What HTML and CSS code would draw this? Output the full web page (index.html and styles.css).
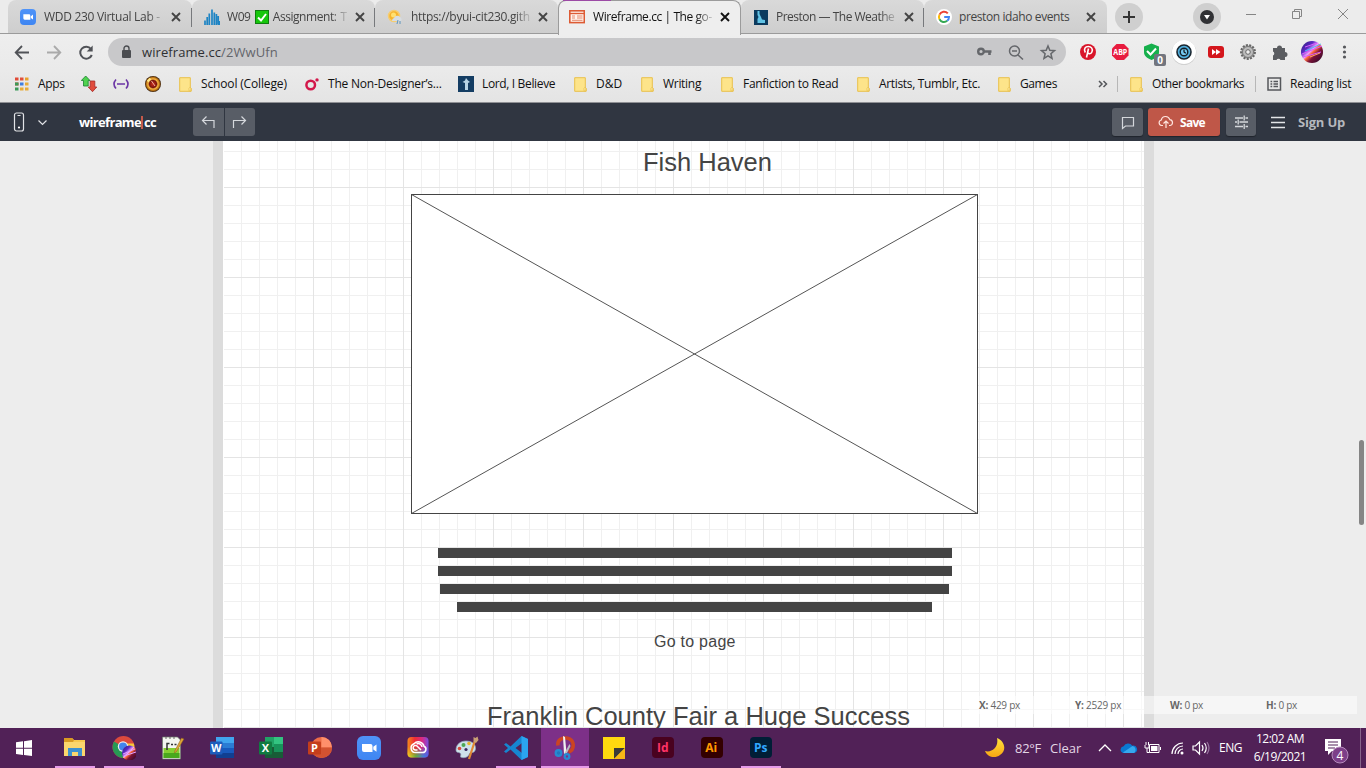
FILE: index.html
```
<!DOCTYPE html>
<html lang="en">
<head>
<meta charset="utf-8">
<title>Wireframe.cc | The go-to wireframing tool</title>
<link rel="stylesheet" href="styles.css">
</head>
<body>
<svg class="defs" width="0" height="0">
  <defs>
    <linearGradient id="g-zoom" x1="0" y1="0" x2="0" y2="1"><stop offset="0" stop-color="#4f93f8"/><stop offset="1" stop-color="#3f86f2"/></linearGradient>
    <linearGradient id="g-neon" x1="0" y1="0" x2="1" y2="1"><stop offset="0" stop-color="#2a1a6e"/><stop offset=".3" stop-color="#5b2bc4"/><stop offset=".45" stop-color="#f3a0ff"/><stop offset=".52" stop-color="#ff6a3c"/><stop offset=".65" stop-color="#7a1236"/><stop offset="1" stop-color="#1a0828"/></linearGradient>
    <linearGradient id="g-rain" x1="0" y1="0" x2="1" y2="0"><stop offset="0" stop-color="#f58a1c"/><stop offset=".35" stop-color="#ee2c34"/><stop offset=".7" stop-color="#d92a86"/><stop offset="1" stop-color="#7a4be0"/></linearGradient>
    <linearGradient id="g-rain-low" x1="0" y1="0" x2="1" y2="0"><stop offset="0" stop-color="#ffdc1c"/><stop offset=".4" stop-color="#4cc43f"/><stop offset=".75" stop-color="#2b8de0"/><stop offset="1" stop-color="#4a62ee"/></linearGradient>
    <linearGradient id="g-fade" x1="0" y1="0" x2="0" y2="1"><stop offset=".45" stop-color="#000"/><stop offset="1" stop-color="#fff"/></linearGradient>
    <mask id="m-low"><rect x="1" y="1" width="22" height="21" fill="url(#g-fade)"/></mask>
    <radialGradient id="g-ball"><stop offset="0" stop-color="#d1301c"/><stop offset=".45" stop-color="#7a160e"/><stop offset=".62" stop-color="#f7b944"/><stop offset=".8" stop-color="#c47a18"/><stop offset="1" stop-color="#2a1404"/></radialGradient>
    <linearGradient id="g-moon" x1="0" y1="0" x2="0" y2="1"><stop offset="0" stop-color="#ffe23c"/><stop offset="1" stop-color="#f8a512"/></linearGradient>
    <symbol id="close" viewBox="0 0 10 10"><path d="M1 1l8 8M9 1l-8 8" stroke="currentColor" stroke-width="1.9"/></symbol>
    <symbol id="folder" viewBox="0 0 13 15"><path d="M.7.7h10.6v9.5l.9 1.3v2.800H.7z" fill="#fde48a" stroke="#e9c04a" stroke-width="1"/><path d="M10 13.800v-2.500l.8-1 1 1.200v2.300z" fill="#fdeaa0" stroke="#e6bb42" stroke-width=".6"/></symbol>
    <symbol id="camera" viewBox="0 0 24 24"><rect width="24" height="24" rx="6" fill="url(#g-zoom)"/><path d="M5 8h8.500q2 0 2 2v6H7q-2 0-2-2zM16.300 10.700L19.500 8.400v7.400l-3.200-2.300z" fill="#fff"/></symbol>
  </defs>
</svg>

<div class="tabs">
  <div class="tab tab-first"><svg class="fav" viewBox="0 0 24 24"><use href="#camera"/></svg><span class="title t1">WDD 230 Virtual Lab -</span><svg class="x"><use href="#close"/></svg></div>
  <div class="tab sep"><svg class="fav" viewBox="0 0 16 16"><path d="M1 16v-4.500M3.200 16V8M5.300 16V4.500M8 16V0.500M10.300 16V3.500M12.400 16V5M14.200 16V7M15.500 16v-4" stroke="#1d84c4" stroke-width="1.700"/></svg><span class="title t2">W09 <i class="check"><svg viewBox="0 0 14 14"><rect x=".5" y=".5" width="13" height="13" fill="#16c60c" stroke="#107c10"/><path d="M3 7.500l3 3L11 4" fill="none" stroke="#fff" stroke-width="2"/></svg></i> Assignment: T</span><svg class="x"><use href="#close"/></svg></div>
  <div class="tab sep"><svg class="fav" viewBox="0 0 16 16"><circle cx="7" cy="7" r="5.500" fill="#f7b32b" stroke="#f6cd70" stroke-width="1.500"/><circle cx="6.500" cy="6" r="2.500" fill="#ffe071"/><path d="M5 12a3 3 0 0 1 2-3 3.500 3.500 0 0 1 6-1 2.500 2.500 0 0 1 1 4z" fill="#d7dde2"/><path d="M11 11l-1 4M13 12v3" stroke="#5f96bd"/></svg><span class="title t3">https://byui-cit230.gith</span><svg class="x"><use href="#close"/></svg></div>
  <div class="tab active"><svg class="fav" viewBox="0 0 16 16"><rect x=".8" y="1.800" width="14.500" height="11.800" fill="#fff3ed" stroke="#dd5b34" stroke-width="1.600"/><path d="M1 4.500h14" stroke="#dd5b34" stroke-width="1.400"/><path d="M3 7h3M8 7h5.500M3 9h3M8 9h5.500M3 11.300h10.500" stroke="#e5896c" stroke-width="1"/></svg><span class="title t4">Wireframe.cc | The go-</span><svg class="x"><use href="#close"/></svg></div>
  <div class="tab"><svg class="fav" viewBox="0 0 16 16"><rect x="1" y="1" width="14" height="15" fill="#0b3a5e"/><path d="M4.500 2h2v3L8 8l1 2.500 3 .5v3H4.500v-4l1-2-1-2z" fill="#62c4e6"/></svg><span class="title t5">Preston — The Weathe</span><svg class="x"><use href="#close"/></svg></div>
  <div class="tab sep"><svg class="fav" viewBox="0 0 16 16"><circle cx="8" cy="8" r="8" fill="#fff"/><g fill="none" stroke-width="2"><path d="M11.800 4.400A5 5 0 0 0 3.500 5.700" stroke="#ea4335"/><path d="M3.500 5.700a5 5 0 0 0 0 4.600" stroke="#fbbc05"/><path d="M3.500 10.300a5 5 0 0 0 7.700 1.500" stroke="#34a853"/><path d="M11.200 11.800A5 5 0 0 0 13 8H8.200" stroke="#4285f4"/></g></svg><span class="title t6">preston idaho events</span><svg class="x"><use href="#close"/></svg></div>
  <svg class="round plus" viewBox="0 0 28 28"><circle cx="14" cy="14" r="14" fill="#cfcfcf"/><path d="M14 8v12M8 14h12" stroke="#333" stroke-width="2"/></svg>
  <svg class="round media" viewBox="0 0 28 28"><circle cx="14" cy="14" r="14" fill="#cfcfcf"/><circle cx="14" cy="14" r="7" fill="#303134"/><path d="M11 12h6l-3 4.500z" fill="#fff"/></svg>
  <svg class="winctl" viewBox="0 0 104 16"><g fill="none" stroke="#858585"><path d="M0 8.500h10M46.500 5.500h7v7h-7zM48.500 5.500v-2h7v7h-2M92 3l10 10M102 3L92 13"/></g></svg>
</div>

<div class="toolbar">
  <svg class="nav" viewBox="0 0 94 19"><g fill="none" stroke-width="1.800"><path d="M15 9.500H2M8 3L1.700 9.500 8 16" stroke="#505257"/><path d="M33 9.500h13M40 3l6.300 6.500L40 16" stroke="#aaa"/><path d="M77 6a6 6 0 1 0 .8 6" stroke="#505257" stroke-width="2"/></g><path d="M78.700 2.500v6h-6z" fill="#505257"/></svg>
  <div class="omni">
    <svg class="lock" viewBox="0 0 10 14"><rect y="5" width="9" height="8" rx="1" fill="#4b4d51"/><path d="M2 6V3.500a2.500 2.500 0 0 1 5 0V6" fill="none" stroke="#4b4d51" stroke-width="1.400"/></svg>
    <span class="url">wireframe.cc<em>/2WwUfn</em></span>
    <svg class="omni-icons" viewBox="0 0 80 18"><g fill="none" stroke="#65676b"><circle cx="4" cy="8.500" r="2.800" stroke-width="2.400"/><path d="M7 8.500h7.500M12.500 8.500V12" stroke-width="2.600"/><circle cx="37.500" cy="8" r="5" stroke-width="1.500"/><path d="M35 8h5M41 12l5 4.500" stroke-width="1.600"/><path d="M71 3l1.800 4.300 4.700.4-3.600 3 1.100 4.600-4-2.500-4 2.500 1.100-4.600-3.600-3 4.700-.4z" stroke-width="1.500"/></g></svg>
  </div>
  <svg class="ext" viewBox="0 0 286 30">
    <circle cx="8" cy="15" r="8" fill="#d9152a"/><path d="M6.500 20.500l2-9M5.300 15.500c-2-3.500 0-6 3-6s5 2.500 3.600 5.500c-1 2.300-3.400 2-4 .8" fill="none" stroke="#fff" stroke-width="1.600"/>
    <path d="M36.500 7h7.500l4.500 4.500v7L44 23h-7.500L32 18.500v-7z" fill="#e81c3f"/><text x="33.300" y="18.200" class="abp" textLength="14" lengthAdjust="spacingAndGlyphs">ABP</text>
    <path d="M71.500 6.500L64 9.500v5.500c0 4 3 6 7.500 8 4.500-2 7.500-4 7.500-8V9.500z" fill="#16b04c"/><path d="M67 14l3.500 3.500 5.500-6" fill="none" stroke="#fff" stroke-width="2"/>
    <rect x="74" y="17" width="12" height="12" rx="2" fill="#72757e"/><text x="77.200" y="26.700" class="zero">0</text>
    <circle cx="104" cy="15.500" r="12.300" fill="#c9c9c9"/><circle cx="104" cy="15" r="12" fill="#fff"/><circle cx="104" cy="15" r="7" fill="#52b1e0" stroke="#1a2630" stroke-width="1.600"/><circle cx="104" cy="15" r="3.800" fill="#74c7ef" stroke="#14202a" stroke-width="1.400"/><path d="M104 12.500V15l1.800 1.300" fill="none" stroke="#111" stroke-width="1.200"/>
    <rect x="128" y="9" width="16" height="12" rx="3" fill="#d4161c"/><path d="M132 12l4 3-4 3zM136 12l4.500 3-4.500 3z" fill="#fff"/>
    <circle cx="168" cy="15" r="6.800" fill="#b5b5b5" stroke="#666" stroke-width="2.300" stroke-dasharray="2 1.300"/><circle cx="168" cy="15" r="5.500" fill="#bbb" stroke="#777"/><circle cx="168" cy="15" r="2.300" fill="#eee" stroke="#666"/>
    <path d="M193 11h4a2.500 2.500 0 1 1 5 0h3v4a2.500 2.500 0 1 1 0 5v3h-4.500a2.200 2.200 0 0 0-4 0H193v-4.500a2.200 2.200 0 0 0 0-4z" fill="#5b5d61"/>
    <circle cx="232" cy="15" r="11" fill="url(#g-neon)"/><path d="M222 17l20-8M223 20l18-5M225 10l12-4" stroke="#d95bff" stroke-width="1"/><path d="M225 14l16-7" stroke="#49b6ff"/><path d="M230 20l10-4" stroke="#ffa463"/>
    <g fill="#55575b"><circle cx="264.500" cy="10" r="1.600"/><circle cx="264.500" cy="15" r="1.600"/><circle cx="264.500" cy="20" r="1.600"/></g>
  </svg>
</div>

<div class="bookmarks">
  <div class="bm apps"><svg viewBox="0 0 16 16"><path d="M0 3h3.500M0 8h3.500" stroke="#e14a36" stroke-width="3"/><path d="M5 3h3.500" stroke="#e1503a" stroke-width="3"/><path d="M10 3h3.500" stroke="#e8a02c" stroke-width="3"/><path d="M0 8h3.500M0 13h3.500" stroke="#3b9a58" stroke-width="3"/><path d="M5 8h3.500" stroke="#3f7fe0" stroke-width="3"/><path d="M10 8h3.500M5 13h3.500M10 13h3.500" stroke="#e8ac38" stroke-width="3"/></svg><span>Apps</span></div>
  <div class="bm icon1"><svg viewBox="0 0 16 16"><path d="M4.700 0L9 4.500H7.200V10H2.500V4.500H.3z" fill="#4fd24f" stroke="#1a8030" stroke-width=".8"/><path d="M9.200 5h4.600v6h2L11.500 15.700 7.200 11h2z" fill="#e04b3c" stroke="#a62a26" stroke-width=".8"/></svg></div>
  <div class="bm icon1"><svg viewBox="0 0 16 16"><path d="M3 3.500Q-1 8 3 12.500M13 3.500q4 4.500 0 9M4 8h8" fill="none" stroke="#6b35a5" stroke-width="1.600"/></svg></div>
  <div class="bm icon2"><svg viewBox="0 0 16 16"><circle cx="8" cy="8" r="8" fill="url(#g-ball)"/><path d="M6.500 5l3.500 5" stroke="#f0b0a0"/><path d="M2.500 5.500l3-3" stroke="#ffe88a" stroke-width="2.200"/></svg></div>
  <div class="bm school"><svg class="fo"><use href="#folder"/></svg><span>School (College)</span></div>
  <div class="bm designer"><svg viewBox="0 0 16 16"><circle cx="5.700" cy="9" r="4.300" fill="none" stroke="#d3174a" stroke-width="2.500"/><circle cx="12" cy="3.900" r="1.700" fill="#d3174a"/></svg><span>The Non-Designer’s...</span></div>
  <div class="bm lord"><svg viewBox="0 0 16 16"><rect width="16" height="16" fill="#143d63"/><path d="M8 2l2 2.500 2 1.500-2 1v7H7V7L4.500 6 7 4.500z" fill="#b7d4e6"/></svg><span>Lord, I Believe</span></div>
  <div class="bm dnd"><svg class="fo"><use href="#folder"/></svg><span>D&amp;D</span></div>
  <div class="bm writing"><svg class="fo"><use href="#folder"/></svg><span>Writing</span></div>
  <div class="bm fan"><svg class="fo"><use href="#folder"/></svg><span>Fanfiction to Read</span></div>
  <div class="bm artists"><svg class="fo"><use href="#folder"/></svg><span>Artists, Tumblr, Etc.</span></div>
  <div class="bm games"><svg class="fo"><use href="#folder"/></svg><span>Games</span></div>
  <svg class="more" viewBox="0 0 10 10"><path d="M1 2l3 3-3 3M5.500 2l3 3-3 3" fill="none" stroke="#55575b" stroke-width="1.500"/></svg>
  <div class="bm other"><svg class="fo"><use href="#folder"/></svg><span>Other bookmarks</span></div>
  <div class="bm reading"><svg viewBox="0 0 16 16"><rect x="1" y="2" width="12.500" height="12" fill="none" stroke="#55575b" stroke-width="1.500"/><path d="M3.500 5.500h1.700M3.500 8h1.700M3.500 10.500h1.700M6.500 5.500H11M6.500 8H11M6.500 10.500H11" stroke="#55575b" stroke-width="1.300"/></svg><span>Reading list</span></div>
</div>

<header class="app">
  <svg class="device" viewBox="0 0 36 20"><g fill="none" stroke="#e1e3e6" stroke-width="1.200"><rect x="1.500" y="1" width="9" height="18" rx="2"/><path d="M4.500 3.500h3M25.500 8.500l4 4 4-4"/></g><circle cx="6" cy="15.500" r="1.100" fill="#fff"/></svg>
  <span class="logo">wireframe<b></b>cc</span>
  <div class="undo"><svg viewBox="0 0 30 28"><path d="M13 8.500l-4 4 4 4M9 12.500h11.500V20" fill="none" stroke="#d5d8dc" stroke-width="1.200"/></svg><svg viewBox="0 0 30 28"><path d="M16 8.500l4 4-4 4M20 12.500H8V20" fill="none" stroke="#d5d8dc" stroke-width="1.200"/></svg></div>
  <div class="btn comment"><svg viewBox="0 0 30 28"><path d="M10.500 9.500h11v8.500h-8l-3 2.500z" fill="none" stroke="#d5d8dc" stroke-width="1.200"/></svg></div>
  <div class="btn save"><svg viewBox="0 0 16 14"><g fill="none" stroke="#ffe4de" stroke-width="1.200"><path d="M5 10.500H3.500a2.800 2.800 0 0 1-.2-5.500 4.400 4.400 0 0 1 8.500-.4 3 3 0 0 1 .4 5.900H11M8 13V6M5.500 8.500L8 6l2.500 2.500"/></g></svg><span>Save</span></div>
  <div class="btn sliders"><svg viewBox="0 0 30 28"><path d="M9 10h8M19.500 10H22M9 14h2M13.500 14H22M9 18.500h8M19.500 18.500H22M18.200 7.500v5M12.200 11.500v5M18.200 16v5" stroke="#d5d8dc" stroke-width="1.300"/></svg></div>
  <svg class="burger" viewBox="0 0 14 13"><path d="M0 1.500h14M0 6.500h14M0 11.500h14" stroke="#e3e5e8" stroke-width="1.300"/></svg>
  <span class="signup">Sign Up</span>
</header>

<main class="workspace">
  <div class="page">
    <h2 class="heading">Fish Haven</h2>
    <svg class="picture" viewBox="0 0 567 320"><rect x=".5" y=".5" width="566" height="319" fill="#fff" stroke="#444"/><path d="M.5.5l566 319M566.500.5L.5 319.500" stroke="#555"/></svg>
    <div class="lines"><i class="l1"></i><i class="l1"></i><i class="l3"></i><i class="l4"></i></div>
    <p class="link">Go to page</p>
    <h2 class="heading next">Franklin County Fair a Huge Success</h2>
  </div>
  <div class="status"><span class="s1"><b>X:</b> 429 px</span><span class="s2"><b>Y:</b> 2529 px</span><span class="s3"><b>W:</b> 0 px</span><span class="s4"><b>H:</b> 0 px</span></div>
  <div class="scroll"></div>
</main>

<footer class="taskbar">
  <div class="start"><svg viewBox="0 0 16 16"><path d="M0 2.300L7 1.300v6.400H0zM8 1.200L16 0v7.700H8zM0 8.700h7v6.200l-7-1zM8 8.700h8V16l-8-1.100z" fill="#fff"/></svg></div>
  <div class="task open"><svg viewBox="0 0 24 24"><path d="M1 2h8l2 2h11v16H1z" fill="#f7c84e"/><path d="M1 2h8l2 2-1 2H1z" fill="#d99a22"/><path d="M1 6h21v14H1z" fill="#fbd66d"/><path d="M5 20v-8h14v8h-4v-4H9v4z" fill="#3d91cf"/></svg></div>
  <div class="task open"><svg viewBox="0 0 24 24"><circle cx="11.500" cy="11" r="11" fill="#dc4a3d"/><path d="M11.500 11L2 5.500A11 11 0 0 0 11 22z" fill="#279a54"/><path d="M11.500 11L11 22A11 11 0 0 0 21.800 7.500H12z" fill="#f5c83a"/><circle cx="11" cy="10.500" r="5.200" fill="#eee"/><circle cx="11" cy="10.500" r="4" fill="#4284ee"/><circle cx="17.500" cy="17" r="7.500" fill="url(#g-neon)"/><path d="M11 18l12-5M12 20l12-4" stroke="#e0a0ff"/></svg></div>
  <div class="task"><svg viewBox="0 0 24 24"><path d="M1.500 1h15l3 3v19h-18z" fill="#f4f6f0" stroke="#6b7a68" stroke-width=".7"/><path d="M2.500 12h16v10h-16z" fill="#84cf31"/><path d="M2.500 17h16v5h-16z" fill="#49a81d"/><path d="M4 2h2M8 2h2M12 2h2" stroke="#666"/><path d="M6 14V7.500h2.500M10 8.500h2M13.500 8.500h2" stroke="#333" stroke-width="1.500" fill="none"/><path d="M20.500 2L14 14.500l-.5 2.500 2-1.500L23 3z" fill="#dda536" stroke="#8a5a1a" stroke-width=".5"/></svg></div>
  <div class="task"><svg viewBox="0 0 24 24"><path d="M6 1h18v6H6z" fill="#41a5ee"/><path d="M6 7h18v5H6z" fill="#2b7cd3"/><path d="M6 12h18v5H6z" fill="#185abd"/><path d="M6 17h18v5H6z" fill="#103f91"/><rect y="5.500" width="12.500" height="13" rx="1" fill="#1d5dbb"/><text x="1" y="15.800" class="office" textLength="10.500" lengthAdjust="spacingAndGlyphs">W</text></svg></div>
  <div class="task"><svg viewBox="0 0 24 24"><path d="M6 1h9v10H6z" fill="#21a366"/><path d="M15 1h9v7h-9z" fill="#33c481"/><path d="M15 8h9v8h-9z" fill="#18935a"/><path d="M6 11h9v11H6zM15 16h9v6h-9z" fill="#185c37"/><rect y="5.500" width="13" height="13" rx="1" fill="#107c41"/><text x="2.700" y="16" class="office">X</text></svg></div>
  <div class="task"><svg viewBox="0 0 24 24"><circle cx="13.500" cy="11.500" r="10.500" fill="#ed6c47"/><path d="M13.500 1a10.500 10.500 0 0 1 10.500 10.500H13.500z" fill="#ff8f6b"/><path d="M3 11.500h21a10.500 10.500 0 0 1-21 0z" fill="#d35230"/><rect y="5.500" width="13" height="13" rx="1" fill="#c43e1c"/><text x="3" y="16" class="office">P</text></svg></div>
  <div class="task"><svg viewBox="0 0 24 24"><use href="#camera"/></svg></div>
  <div class="task"><svg viewBox="0 0 24 24"><rect x="1.500" y="1" width="21" height="20.500" rx="4" fill="url(#g-rain)"/><rect x="1.500" y="1" width="21" height="20.500" rx="4" fill="url(#g-rain-low)" mask="url(#m-low)"/><g fill="none" stroke="#fff" stroke-width="1.500"><path d="M16.500 16.500h-7A4.500 4.500 0 0 1 8 7.800a5.800 5.800 0 0 1 10 2.400 3.300 3.300 0 0 1-1.500 6.300zM15 14l-4-4a2.300 2.300 0 1 0-1.500 4h2M10.500 8a3.800 3.800 0 0 1 5.500 3"/></g></svg></div>
  <div class="task"><svg viewBox="0 0 24 24"><path d="M1 14C1 8 6 5 11 5c6 0 10 3 9.500 8-1 5-4 2.500-6 4.500-1 4-6 5-9 3.500 0-2 1-3-.5-4s-4 0-4-3z" fill="#cfe1ea" stroke="#8fa8b8" stroke-width=".7"/><circle cx="8.500" cy="9" r="2" fill="#4ba854"/><circle cx="14" cy="7.500" r="1.800" fill="#e6b42e"/><circle cx="4.500" cy="12.500" r="1.800" fill="#d94d3c"/><circle cx="11" cy="13.500" r="1.600" fill="#3a2a60"/><path d="M19.500 6L14 23" stroke="#e08a35" stroke-width="2.200"/><path d="M18.500 1l2 1 2-1.500 1 3.500-2.500 3-2.500-1z" fill="#c9a075"/></svg></div>
  <div class="task open"><svg viewBox="0 0 24 24"><path d="M17.500 0L24 3v18l-6.500 3L6.500 13.500 2 17 0 15.500 4 12 0 8.500 2 7l4.500 3.500zM18 7l-6.500 5 6.500 5z" fill="#1686d0"/><path d="M17.500 0L24 3v18l-6.500 3z" fill="#2ba5ef"/></svg></div>
  <div class="task current"><svg viewBox="0 0 24 24"><path d="M5 9.500C4 4 9 1.500 13.500 2c5 .5 7.500 4.500 6.500 9-.5 3-2.500 4.500-4.500 5" fill="none" stroke="#cb4423" stroke-width="3.600"/><path d="M10 0l2 1 1.500 16-2.500 1z" fill="#f1f1f1"/><path d="M16.500 8L11 18l3-1 3.500-7z" fill="#b9bcc4"/><g fill="none" stroke="#268ad2" stroke-width="2.300"><circle cx="5.500" cy="17" r="2.800" fill="#2475bc"/><circle cx="14" cy="20.500" r="2.300"/></g></svg></div>
  <div class="task"><svg viewBox="0 0 24 24"><path d="M1 1h22v22H1z" fill="#ffd90f"/><path d="M12 12h11L12 23z" fill="#3b3b38"/><path d="M23 12v11H12z" fill="#f6b715"/></svg></div>
  <div class="task"><svg viewBox="0 0 24 24"><rect x="1" y="1" width="22" height="21" rx="4" fill="#49021f"/><text x="6" y="16" class="adobe id">Id</text></svg></div>
  <div class="task"><svg viewBox="0 0 24 24"><rect x="1" y="1" width="22" height="21" rx="4" fill="#330000"/><text x="5.300" y="16" class="adobe ai">Ai</text></svg></div>
  <div class="task open"><svg viewBox="0 0 24 24"><rect x="1" y="1" width="22" height="21" rx="4" fill="#001e36"/><text x="5" y="16" class="adobe ps">Ps</text></svg></div>
  <svg class="moon" viewBox="0 0 20 20"><path d="M12 0C20 3 22 13 15 17 10 21 2 19 0 13c7 2 14-4 12-13z" fill="url(#g-moon)"/></svg>
  <span class="temp">82°F</span><span class="clear">Clear</span>
  <svg class="tray" viewBox="0 0 112 20">
    <path d="M1 13l6-6 6 6" fill="none" stroke="#fff" stroke-width="1.300"/>
    <path d="M25 15a3.500 3.500 0 0 1 .6-6.800 5 5 0 0 1 8.700-.5 3.700 3.700 0 0 1 2 7.300z" fill="#0a78d1"/><path d="M25 14.500l9.500-6.500a4 4 0 0 1 1.700 7H26z" fill="#36a8ee"/>
    <g fill="none" stroke="#fff"><path d="M51.500 6.500h9.500v8H51.500zM62.500 9v3M47 7v3h4V7M48 4v3M50.500 4v3M49 10v4.500h2.500"/></g><path d="M53 8h6.500v5H53z" fill="#fff"/>
    <g fill="none" stroke="#fff" stroke-width="1.200"><path d="M74 16a11 11 0 0 1 11-11M77 16a8 8 0 0 1 8-8M80 16a5 5 0 0 1 5-5"/><path d="M95 8h2.500l4-4v12l-4-4H95zM104 7q2 3 0 6M106.500 5q3.500 5 0 10"/><path d="M109 4q4 6 0 12" stroke="#9a74a0"/></g><circle cx="84" cy="15" r="1.500" fill="#fff"/>
  </svg>
  <span class="lang">ENG</span>
  <div class="clock"><span class="time">12:02 AM</span><span class="date">6/19/2021</span></div>
  <svg class="notif" viewBox="0 0 30 28"><path d="M1 2h16v12H8l-4 4v-4H1z" fill="#fff"/><path d="M4 5h10M4 8h10M4 11h7" stroke="#512157"/><circle cx="16" cy="18" r="8" fill="#7d3f88" stroke="#b68bbc"/><text x="12.500" y="22.500" class="four">4</text></svg>
  <div class="peek"></div>
</footer>
</body>
</html>
```
FILE: styles.css
```
* { box-sizing: border-box; }
body { margin: 0; width: 1366px; height: 768px; overflow: hidden; background: #ececec; font: 12px/16px "Open Sans", "Noto Sans", sans-serif; color: #222; }
svg { display: block; flex: none; }
span { white-space: nowrap; flex: none; }
.defs { position: absolute; }

.tabs { display: flex; height: 34px; padding-left: 8px; background: #ececec; border-bottom: 1px solid #9b9b9b; }
.tab { display: flex; align-items: center; flex: none; width: 183px; height: 33px; padding-left: 12px; background: linear-gradient(#d9d9d9, #cecece); border-radius: 8px 8px 0 0; position: relative; color: #444; }
.tab-first { width: 184px; }
.sep::before { content: ""; position: absolute; left: -1px; top: 8px; width: 1px; height: 19px; background: #77797c; }
.active { height: 35px; background: #eee; border: 1px solid #9b9b9b; border-bottom: 0; padding: 0 0 2px 10px; color: #111; }
.active::before { content: ""; position: absolute; left: 4px; top: -1px; width: 48px; height: 1px; background: #9c4aa5; }
.fav { width: 16px; height: 16px; }
.title { width: 120px; margin-left: 8px; overflow: hidden; -webkit-mask-image: linear-gradient(90deg, #000 86%, transparent 102%); mask-image: linear-gradient(90deg, #000 86%, transparent 102%); }
.t1 { letter-spacing: -.3px; }
.t2 { margin-left: 7px; width: 121px; letter-spacing: -.45px; word-spacing: 1.500px; }
.t3 { letter-spacing: -.32px; }
.t4 { letter-spacing: -.42px; }
.t5 { margin-left: 7px; width: 121px; letter-spacing: -.5px; }
.t6 { margin-left: 7px; letter-spacing: -.4px; -webkit-mask-image: none; mask-image: none; }
.check { display: inline-block; width: 14px; height: 14px; vertical-align: -3px; }
.x { width: 10px; height: 10px; margin-left: 7px; color: #444; }
.active .x { color: #111; }
.round { width: 28px; height: 28px; margin-top: 3px; }
.plus { margin-left: 8px; }
.media { margin-left: 50px; }
.winctl { width: 104px; height: 16px; margin: 6px 0 0 25px; }

.toolbar { display: flex; align-items: center; height: 36px; padding-left: 14px; background: linear-gradient(#eee, #eaeaea); }
.nav { width: 94px; height: 19px; }
.omni { display: flex; align-items: center; width: 958px; height: 28px; border-radius: 14px; background: #c8c8ca; }
.lock { width: 10px; height: 14px; margin-left: 14px; }
.url { width: 835px; margin-left: 10px; font-size: 13px; letter-spacing: .08px; color: #2f3033; }
.url em { font-style: normal; color: #63656a; }
.omni-icons { width: 80px; height: 18px; }
.ext { width: 286px; height: 30px; margin-left: 14px; }
.abp { font: bold 8.500px "Open Sans", sans-serif; fill: #fff; }
.zero { font: bold 10px "Open Sans", sans-serif; fill: #fff; }

.bookmarks { display: flex; align-items: center; height: 33px; padding: 0 0 4px 15px; background: linear-gradient(#eaeaea, #e4e4e4); border-bottom: 1px solid #8f9094; }
.bm { display: flex; align-items: center; flex: none; letter-spacing: -.3px; color: #111; }
.bm svg { width: 16px; height: 16px; }
.bm .fo { width: 13px; height: 15px; }
.bm span { margin-left: 9px; }
.apps { width: 66px; }
.apps span { margin-left: 7px; }
.icon1 { width: 32px; }
.icon2 { width: 34px; }
.school { width: 126px; letter-spacing: -.15px; }
.designer { width: 153px; letter-spacing: -.22px; }
.designer span { margin-left: 7px; }
.lord { width: 116px; letter-spacing: -.35px; }
.lord span { margin-left: 8px; }
.dnd { width: 67px; letter-spacing: 0; }
.writing { width: 80px; }
.fan { width: 136px; }
.artists { width: 141px; letter-spacing: -.34px; }
.games { width: 100px; letter-spacing: -.4px; }
.more { width: 10px; height: 10px; }
.other { width: 138px; height: 16px; border-left: 1px solid #b7b7b7; margin-left: 9px; padding-left: 12px; letter-spacing: -.43px; }
.reading { height: 16px; border-left: 1px solid #b7b7b7; padding-left: 11px; letter-spacing: -.25px; }
.reading span { margin-left: 7px; }

.app { display: flex; align-items: center; height: 38px; padding-left: 13px; background: #303641; }
.device { width: 36px; height: 20px; }
.logo { width: 114px; margin-left: 30px; font-size: 13px; font-weight: 700; letter-spacing: -.66px; color: #fff; }
.logo b { display: inline-block; width: 2px; height: 13px; background: #c55a4a; vertical-align: -2px; margin-right: 1px; }
.undo { display: flex; gap: 1px; width: 62px; height: 28px; border-radius: 3px; overflow: hidden; }
.undo svg { width: 31px; height: 28px; background: #585d66; }
.btn { display: flex; align-items: center; height: 28px; border-radius: 3px; background: #585d66; box-shadow: 0 1px 1px #20242c; }
.btn > svg { width: 30px; height: 28px; }
.comment { margin-left: 857px; width: 31px; }
.save { width: 72px; margin-left: 5px; padding-left: 10px; background: #bf5748; }
.btn.save > svg { width: 16px; height: 14px; }
.save span { margin-left: 6px; font-weight: 700; letter-spacing: -.7px; padding-top: 1px; color: #fff; }
.sliders { width: 30px; margin-left: 6px; }
.burger { width: 14px; height: 13px; margin-left: 15px; }
.signup { margin-left: 13px; font-size: 13px; font-weight: 700; letter-spacing: -.2px; color: #b5b8bd; }

.workspace { position: relative; height: 587px; padding: 0 212px 0 213px; background: #ededed; overflow: hidden; }
.page { height: 587px; border: solid #dcdcdc; border-width: 0 10px; padding-top: 5px; background-color: #fff;
  background-image: linear-gradient(90deg, #fff 1px, transparent 1px), linear-gradient(90deg, #e4e4e4 1px, transparent 1px), linear-gradient(#e4e4e4 1px, transparent 1px), linear-gradient(90deg, #f0f0f0 1px, transparent 1px), linear-gradient(#f0f0f0 1px, transparent 1px);
  background-size: 921px 587px, 90px 90px, 90px 90px, 18px 18px, 18px 18px; background-position: 0 0, 0 0, 0 46px, 0 0, 0 10px; }
.heading { margin: 0 0 0 420px; font: 25.500px/32px "Liberation Sans", Arial, sans-serif; color: #444; white-space: nowrap; }
.picture { width: 567px; height: 320px; margin: 16px 0 0 188px; }
.lines { display: flex; flex-direction: column; gap: 8px; margin: 34px 0 0 215px; }
.lines i { height: 10px; background: #444; }
.l1 { width: 514px; }
.l3 { width: 509px; margin-left: 2px; }
.l4 { width: 475px; margin-left: 19px; }
.link { margin: 20px 0 0 431px; font: 16px/20px "Liberation Sans", Arial, sans-serif; letter-spacing: .25px; color: #444; }
.next { margin: 48px 0 0 264px; letter-spacing: .02px; }
.status { position: absolute; left: 969px; top: 555px; display: flex; width: 388px; height: 18px; padding-left: 10px; background: rgba(255,255,255,.5); font-size: 10px; line-height: 19px; letter-spacing: -.24px; color: #666; }
.s1 { width: 96px; }
.s2 { width: 95px; }
.s3 { width: 96px; }
.scroll { position: absolute; right: 2px; top: 299px; width: 5px; height: 85px; border-radius: 3px; background: #858585; }

.taskbar { display: flex; align-items: center; height: 40px; background: #512157; color: #fff; }
.start { width: 51px; padding-left: 16px; }
.start svg { width: 16px; height: 16px; }
.task { display: flex; align-items: center; justify-content: center; flex: none; width: 48px; height: 40px; margin-right: 1px; }
.task svg { width: 24px; height: 24px; }
.open { background: linear-gradient(#e59be8, #e59be8) 4px 38px / 40px 2px no-repeat; }
.current { background: linear-gradient(#e59be8, #e59be8) 0 38px / 48px 2px no-repeat #7d3088; }
.office { font: bold 11px "Open Sans", sans-serif; fill: #fff; }
.adobe { font: bold 12px "Open Sans", sans-serif; }
.id { fill: #ff3366; }
.ai { fill: #ff9a00; }
.ps { fill: #31a8ff; }
.moon { width: 20px; height: 20px; margin-left: 199px; }
.temp { width: 35px; margin-left: 10px; font-size: 13px; letter-spacing: -.3px; color: #e3d6e5; }
.clear { width: 48px; font-size: 13px; letter-spacing: 0; color: #e3d6e5; }
.tray { width: 112px; height: 20px; }
.lang { width: 30px; margin-left: 9px; letter-spacing: -.5px; }
.clock { display: flex; flex-direction: column; align-items: center; width: 62px; line-height: 18px; letter-spacing: -.5px; }
.notif { width: 30px; height: 28px; margin: 5px 0 0 13px; }
.four { font: 12px "Open Sans", sans-serif; fill: #fff; }
.peek { width: 1px; height: 40px; margin-left: 6px; background: #86648a; }
```
